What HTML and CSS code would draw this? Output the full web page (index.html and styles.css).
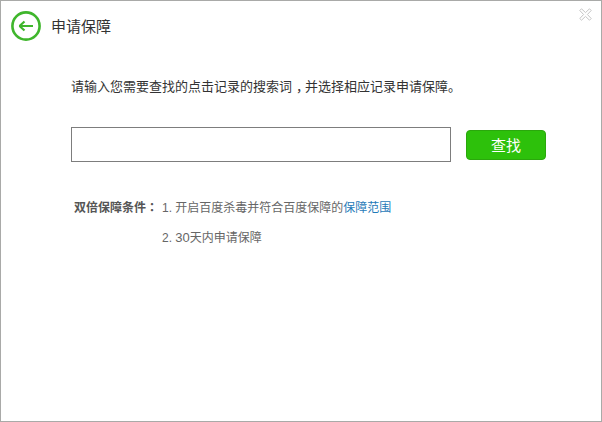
FILE: index.html
```html
<!DOCTYPE html>
<html lang="zh-CN">
<head>
<meta charset="utf-8">
<title>申请保障</title>
<link rel="stylesheet" href="styles.css">
</head>
<body>
<div class="win">
  <header class="head">
    <svg class="back" width="30" height="30" viewBox="0 0 30 30" aria-hidden="true">
      <circle cx="15" cy="15" r="13.6" fill="#fff" stroke="#3fb62c" stroke-width="2.6"/>
      <path d="M8 15H22M8.5 15L13.5 10.5M8.5 15L13.5 19.5" fill="none" stroke="#3fb62c" stroke-width="2.2"/>
    </svg>
    <h1 class="title">申请保障</h1>
    <svg class="close" width="13" height="13" viewBox="0 0 13 13" aria-hidden="true">
      <path d="M2.5 .8L6.5 4.6L10.5 .8L12.2 2.5L8.4 6.5L12.2 10.5L10.5 12.2L6.5 8.4L2.5 12.2L.8 10.5L4.6 6.5L.8 2.5Z" fill="#fff" stroke="#c4c4c4" stroke-width="1"/>
    </svg>
  </header>
  <main class="body">
    <p class="lead">请输入您需要查找的点击记录的搜索词<span class="comma">，</span>并选择相应记录申请保障。</p>
    <div class="search">
      <input class="field" type="text">
      <button class="btn" type="button">查找</button>
    </div>
    <div class="terms">
      <div class="term-label">双倍保障条件<span class="punct" lang="zh-Hant">：</span></div>
      <div class="term-list">
        <div>1. 开启百度杀毒并符合百度保障的<a class="link" href="#">保障范围</a></div>
        <div>2. <span class="num">30</span>天内申请保障</div>
      </div>
    </div>
  </main>
</div>
</body>
</html>
```
FILE: styles.css
```css
* { box-sizing: border-box; }
html, body { margin: 0; padding: 0; background: #fff; }
body { font-family: "Liberation Sans", "Noto Sans CJK SC", sans-serif; }
.win {
  width: 602px;
  height: 422px;
  border: 1px solid #a9aaa8;
  background: #fff;
  overflow: hidden;
}
.head {
  display: flex;
  align-items: center;
  height: 50px;
  padding: 0 9px 0 10px;
}
.back { flex: none; }
.title {
  margin: -1px 0 0 10px;
  font-size: 15px;
  font-weight: 400;
  color: #333;
}
.close { margin: -23px 0 0 auto; flex: none; }
.body { padding: 26px 0 0 70px; }
.lead {
  margin: 0;
  font-size: 13px;
  line-height: 20px;
  color: #333;
}
.comma { padding-left: 4px; letter-spacing: -4px; }
.punct { font-family: "Noto Sans CJK TC", sans-serif; line-height: 0; }
.search {
  display: flex;
  align-items: center;
  gap: 15px;
  margin-top: 30px;
}
.field {
  width: 380px;
  height: 35px;
  border: 1px solid #7d7d7d;
  background: #fff;
  outline: none;
  padding: 0 6px;
}
.btn {
  width: 80px;
  height: 30px;
  border: 1px solid #2aa80c;
  border-radius: 4px;
  background: #2dc10b;
  color: #fff;
  font: 15px "Liberation Sans", "Noto Sans CJK SC", sans-serif;
  padding: 0;
}
.terms {
  display: flex;
  margin: 36px 0 0 3px;
  font-size: 12px;
  line-height: 20px;
  color: #666;
}
.term-label { width: 88px; font-weight: 700; color: #555; }
.term-list { display: flex; flex-direction: column; gap: 10px; }
.num { font-size: 13px; line-height: 0; }
.link { color: #1f7ab8; text-decoration: none; }
```
